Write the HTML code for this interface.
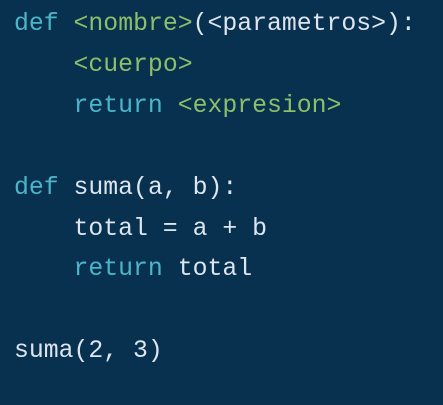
<!DOCTYPE html>
<html><head><style>
html,body{margin:0;padding:0;}
body{width:443px;height:405px;background:#08304f;overflow:hidden;}
pre{margin:0;position:absolute;left:14px;top:4px;font-family:"Liberation Mono",monospace;font-size:24.8px;line-height:40.9px;color:#dde5ee;}
.k{color:#4cb6c9}.g{color:#8dbf6a}
</style></head><body>
<pre><span class="k">def</span> <span class="g">&lt;nombre&gt;</span>(&lt;parametros&gt;):
    <span class="g">&lt;cuerpo&gt;</span>
    <span class="k">return</span> <span class="g">&lt;expresion&gt;</span>

<span class="k">def</span> suma(a, b):
    total = a + b
    <span class="k">return</span> total

suma(2, 3)</pre>
</body></html>
